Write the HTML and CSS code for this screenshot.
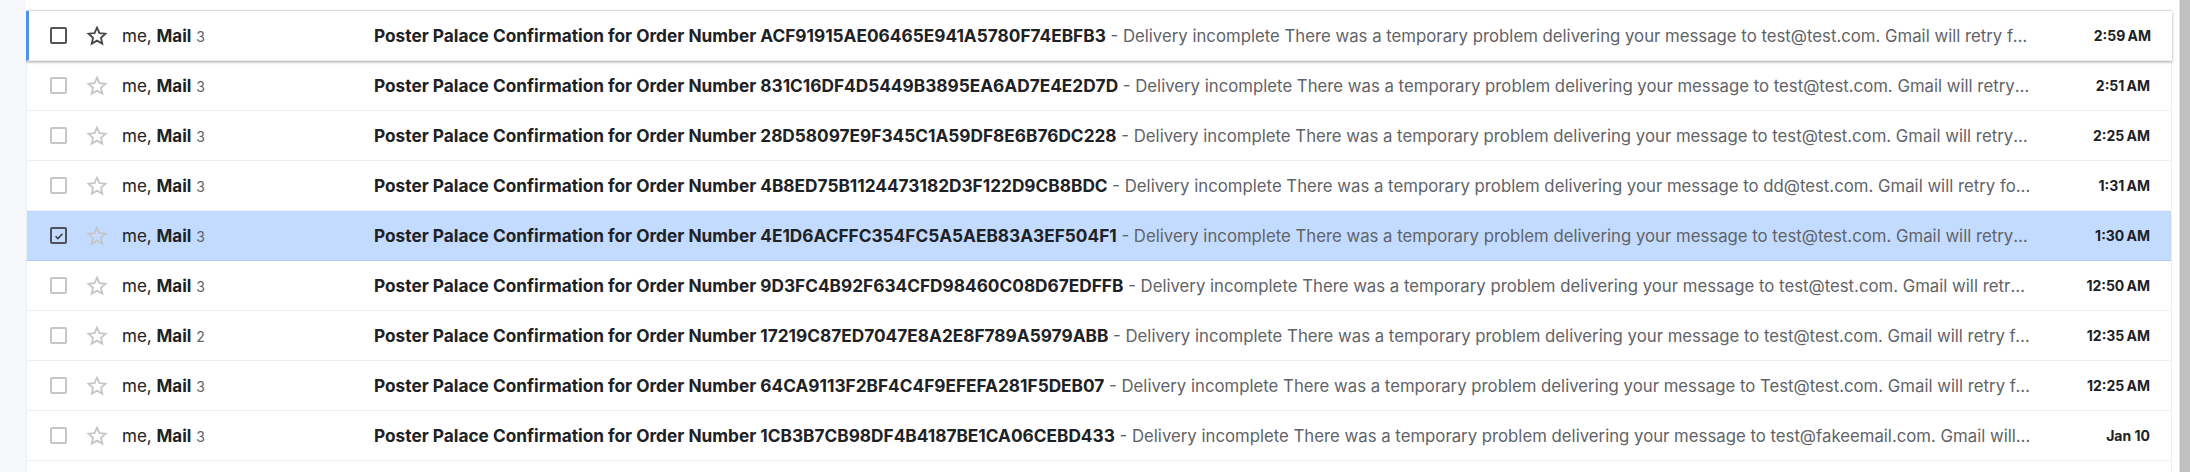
FILE: index.html
```html
<!DOCTYPE html>
<html>
<head>
<meta charset="utf-8">
<link rel="stylesheet" href="styles.css">
</head>
<body>
<div class="page">
  <div class="side"></div>
  <div class="main">
    <div class="list">
      <div class="row focused">
        <span class="cb"></span>
        <svg class="star" viewBox="0 0 24 24"><path d="M12 3.6l2.47 5.52 6.03.6-4.53 4.02 1.32 5.9L12 16.6l-5.29 3.04 1.32-5.9L3.5 9.72l6.03-.6z"/></svg>
        <div class="sender">me, <b>Mail</b> <span class="cnt">3</span></div>
        <div class="content"><b class="subj">Poster Palace Confirmation for Order Number ACF91915AE06465E941A5780F74EBFB3</b><span class="snip"> - Delivery incomplete There was a temporary problem delivering your message to test@test.com. Gmail will retry for 46 more hours.</span></div>
        <div class="time">2:59&#8239;AM</div>
      </div>
      <div class="row">
        <span class="cb"></span>
        <svg class="star" viewBox="0 0 24 24"><path d="M12 3.6l2.47 5.52 6.03.6-4.53 4.02 1.32 5.9L12 16.6l-5.29 3.04 1.32-5.9L3.5 9.72l6.03-.6z"/></svg>
        <div class="sender">me, <b>Mail</b> <span class="cnt">3</span></div>
        <div class="content"><b class="subj">Poster Palace Confirmation for Order Number 831C16DF4D5449B3895EA6AD7E4E2D7D</b><span class="snip"> - Delivery incomplete There was a temporary problem delivering your message to test@test.com. Gmail will retry for 46 more hours.</span></div>
        <div class="time">2:51&#8239;AM</div>
      </div>
      <div class="row">
        <span class="cb"></span>
        <svg class="star" viewBox="0 0 24 24"><path d="M12 3.6l2.47 5.52 6.03.6-4.53 4.02 1.32 5.9L12 16.6l-5.29 3.04 1.32-5.9L3.5 9.72l6.03-.6z"/></svg>
        <div class="sender">me, <b>Mail</b> <span class="cnt">3</span></div>
        <div class="content"><b class="subj">Poster Palace Confirmation for Order Number 28D58097E9F345C1A59DF8E6B76DC228</b><span class="snip"> - Delivery incomplete There was a temporary problem delivering your message to test@test.com. Gmail will retry for 46 more hours.</span></div>
        <div class="time">2:25&#8239;AM</div>
      </div>
      <div class="row">
        <span class="cb"></span>
        <svg class="star" viewBox="0 0 24 24"><path d="M12 3.6l2.47 5.52 6.03.6-4.53 4.02 1.32 5.9L12 16.6l-5.29 3.04 1.32-5.9L3.5 9.72l6.03-.6z"/></svg>
        <div class="sender">me, <b>Mail</b> <span class="cnt">3</span></div>
        <div class="content"><b class="subj">Poster Palace Confirmation for Order Number 4B8ED75B1124473182D3F122D9CB8BDC</b><span class="snip"> - Delivery incomplete There was a temporary problem delivering your message to dd@test.com. Gmail will retry for 46 more hours.</span></div>
        <div class="time">1:31&#8239;AM</div>
      </div>
      <div class="row selected">
        <span class="cb checked"><svg viewBox="0 0 12 12"><path d="M2.6 6.2l2.3 2.3 4.6-4.8"/></svg></span>
        <svg class="star" viewBox="0 0 24 24"><path d="M12 3.6l2.47 5.52 6.03.6-4.53 4.02 1.32 5.9L12 16.6l-5.29 3.04 1.32-5.9L3.5 9.72l6.03-.6z"/></svg>
        <div class="sender">me, <b>Mail</b> <span class="cnt">3</span></div>
        <div class="content"><b class="subj">Poster Palace Confirmation for Order Number 4E1D6ACFFC354FC5A5AEB83A3EF504F1</b><span class="snip"> - Delivery incomplete There was a temporary problem delivering your message to test@test.com. Gmail will retry for 46 more hours.</span></div>
        <div class="time">1:30&#8239;AM</div>
      </div>
      <div class="row">
        <span class="cb"></span>
        <svg class="star" viewBox="0 0 24 24"><path d="M12 3.6l2.47 5.52 6.03.6-4.53 4.02 1.32 5.9L12 16.6l-5.29 3.04 1.32-5.9L3.5 9.72l6.03-.6z"/></svg>
        <div class="sender">me, <b>Mail</b> <span class="cnt">3</span></div>
        <div class="content"><b class="subj">Poster Palace Confirmation for Order Number 9D3FC4B92F634CFD98460C08D67EDFFB</b><span class="snip"> - Delivery incomplete There was a temporary problem delivering your message to test@test.com. Gmail will retry for 46 more hours.</span></div>
        <div class="time">12:50&#8239;AM</div>
      </div>
      <div class="row">
        <span class="cb"></span>
        <svg class="star" viewBox="0 0 24 24"><path d="M12 3.6l2.47 5.52 6.03.6-4.53 4.02 1.32 5.9L12 16.6l-5.29 3.04 1.32-5.9L3.5 9.72l6.03-.6z"/></svg>
        <div class="sender">me, <b>Mail</b> <span class="cnt">2</span></div>
        <div class="content"><b class="subj">Poster Palace Confirmation for Order Number 17219C87ED7047E8A2E8F789A5979ABB</b><span class="snip"> - Delivery incomplete There was a temporary problem delivering your message to test@test.com. Gmail will retry for 46 more hours.</span></div>
        <div class="time">12:35&#8239;AM</div>
      </div>
      <div class="row">
        <span class="cb"></span>
        <svg class="star" viewBox="0 0 24 24"><path d="M12 3.6l2.47 5.52 6.03.6-4.53 4.02 1.32 5.9L12 16.6l-5.29 3.04 1.32-5.9L3.5 9.72l6.03-.6z"/></svg>
        <div class="sender">me, <b>Mail</b> <span class="cnt">3</span></div>
        <div class="content"><b class="subj">Poster Palace Confirmation for Order Number 64CA9113F2BF4C4F9EFEFA281F5DEB07</b><span class="snip"> - Delivery incomplete There was a temporary problem delivering your message to Test@test.com. Gmail will retry for 46 more hours.</span></div>
        <div class="time">12:25&#8239;AM</div>
      </div>
      <div class="row">
        <span class="cb"></span>
        <svg class="star" viewBox="0 0 24 24"><path d="M12 3.6l2.47 5.52 6.03.6-4.53 4.02 1.32 5.9L12 16.6l-5.29 3.04 1.32-5.9L3.5 9.72l6.03-.6z"/></svg>
        <div class="sender">me, <b>Mail</b> <span class="cnt">3</span></div>
        <div class="content"><b class="subj">Poster Palace Confirmation for Order Number 1CB3B7CB98DF4B4187BE1CA06CEBD433</b><span class="snip"> - Delivery incomplete There was a temporary problem delivering your message to test@fakeemail.com. Gmail will retry for 46 more hours.</span></div>
        <div class="time">Jan 10</div>
      </div>
      <div class="row"></div>
    </div>
  </div>
  <div class="scroll"></div>
</div>
</body>
</html>
```

FILE: styles.css
```css
html, body {
  margin: 0;
  padding: 0;
  background: #ffffff;
  overflow: hidden;
}
.page {
  display: flex;
  width: 2190px;
  height: 472px;
  font-family: Inter, "Liberation Sans", Arial, sans-serif;
  color: #202124;
}
.side {
  width: 26px;
  flex: none;
  background: #f6f8fc;
}
.main {
  flex: 1;
  min-width: 0;
  padding: 10px 7px 0 0;
  overflow: hidden;
}
.list {
  border-top: 1px solid #e5e7ea;
}
.row {
  display: flex;
  align-items: center;
  height: 50px;
  box-sizing: border-box;
  border-bottom: 1px solid #eceff1;
  border-left: 1px solid #eceff1;
  border-right: 1px solid #eceff1;
  background: #ffffff;
  position: relative;
}
.row.focused {
  border-left: 3px solid #4d90fe;
  border-right: none;
  box-shadow: 0 1px 3px 0 rgba(60,64,67,.35), 0 1px 2px 0 rgba(60,64,67,.15);
  z-index: 2;
}
.row.selected {
  background: #c2dbff;
  border-bottom-color: #b5cdf2;
}
.cb {
  flex: none;
  width: 13px;
  height: 13px;
  border: 2px solid #c6c6c6;
  border-radius: 2px;
  margin-left: 23px;
  display: flex;
  align-items: center;
  justify-content: center;
}
.row.focused .cb {
  margin-left: 21px;
  border-color: #555555;
}
.cb.checked {
  border-color: #4f5358;
}
.cb svg {
  width: 12px;
  height: 12px;
  fill: none;
  stroke: #3c4043;
  stroke-width: 1.6;
}
.star {
  flex: none;
  width: 24px;
  height: 24px;
  margin-left: 18px;
  fill: none;
  stroke: #c6c6c6;
  stroke-width: 1.8;
  stroke-linejoin: miter;
}
.row.focused .star {
  stroke: #444746;
}
.sender {
  flex: none;
  width: 252px;
  margin-left: 13px;
  font-size: 17px;
  white-space: nowrap;
  color: #202124;
}
.sender b {
  font-weight: 700;
}
.cnt {
  font-size: 14px;
  color: #5f6368;
}
.content {
  flex: 1;
  min-width: 0;
  font-size: 16.75px;
  white-space: nowrap;
  overflow: hidden;
  text-overflow: ellipsis;
  color: #5f6368;
}
.subj {
  font-size: 17.25px;
  font-weight: 700;
  color: #202124;
}
.time {
  flex: none;
  width: 118px;
  padding-right: 21px;
  text-align: right;
  font-size: 14px;
  font-weight: 700;
  color: #202124;
  white-space: nowrap;
}
.scroll {
  flex: none;
  width: 10px;
  background: #c1c1c1;
  border-left: 1px solid #e0e0e0;
}
```
